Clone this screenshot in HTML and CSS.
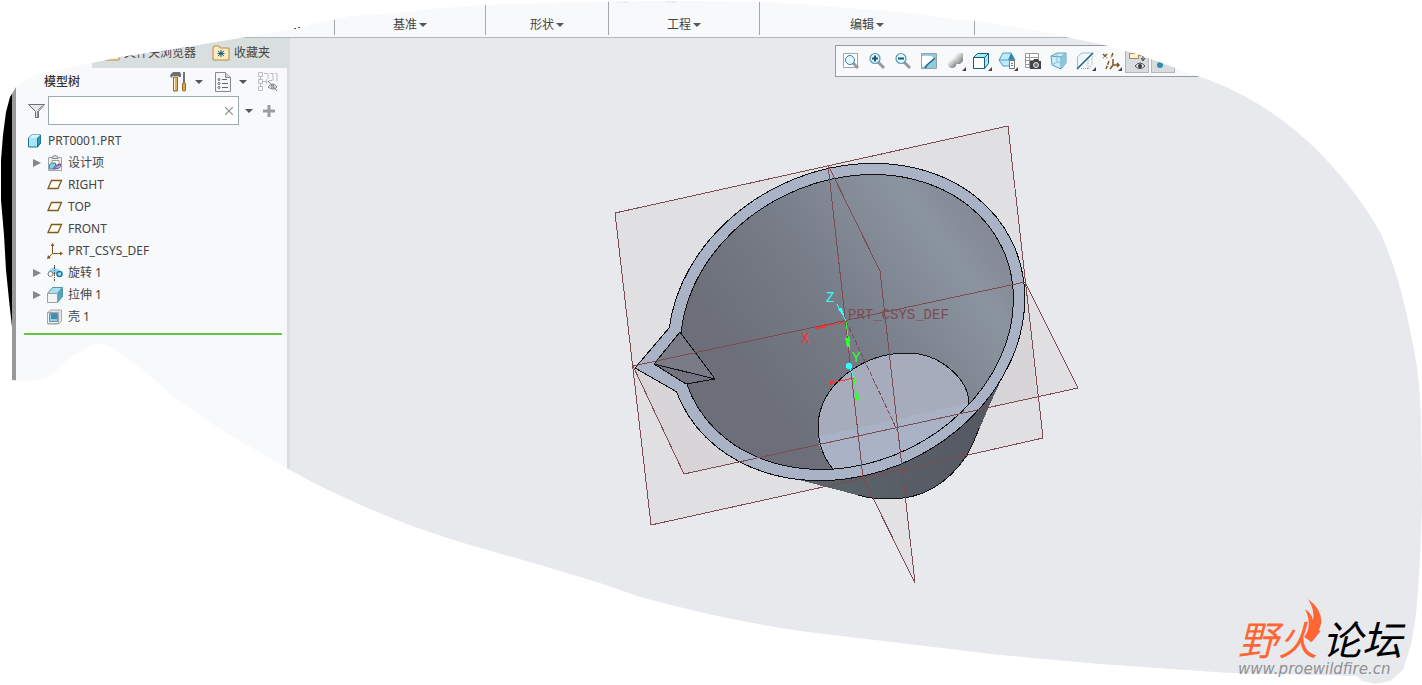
FILE: index.html
```html
<!DOCTYPE html>
<html lang="zh-CN">

<head>
    <meta charset="UTF-8">
    <meta name="viewport" content="width=device-width, initial-scale=1">
    <title>PRT0001</title>
    <link rel="stylesheet" href="styles.css">
</head>

<body>
<div class="app">
    <header class="ribbon">
        <div class="group group-first"></div>
        <div class="group group-datum"><button>基准<i class="caret"></i></button></div>
        <div class="group group-shape"><button>形状<i class="caret"></i></button></div>
        <div class="group group-datum"><button>工程<i class="caret"></i></button></div>
        <div class="group group-edit"><button>编辑<i class="caret"></i></button></div>
        <div class="group group-last"><button aria-label="更多"><i class="caret"></i></button></div>
    </header>

    <div class="main">
        <div class="edge"></div>
        <aside class="sidebar">
            <nav class="tabs">
                <span class="tab-active"></span>
                <button class="tab">
                    <svg width="16" height="16" viewBox="0 0 16 16"><path d="M1 3h6l1-2h5l1 2h1v12H1z" fill="#fde9bd" stroke="#b58a42"/></svg>
                    文件夹浏览器
                </button>
                <button class="tab">
                    <svg width="18" height="16" viewBox="0 0 18 16">
                        <path d="M1 3l1-2h5l1 2h9v12H1z" fill="#fde9bd" stroke="#b58a42"/>
                        <path d="M9 5v7M6 6l6 5M12 6l-6 5M5.500 8.500h7" stroke="#1b6584" stroke-width="1"/>
                        <circle cx="9" cy="8.500" r="1.500" fill="#1b6584"/>
                    </svg>
                    收藏夹
                </button>
            </nav>

            <div class="panel-head">
                <h2>模型树</h2>
                <button class="tool" aria-label="设置">
                    <svg width="18" height="20" viewBox="0 0 18 20">
                        <path d="M0 3l3-3h7l1 2v3H9L8 4H3L1 6z" fill="#6c6e78"/>
                        <path d="M3.500 5h4v14h-4z" fill="#dcae62" stroke="#93692a"/>
                        <path d="M4.500 6v12" stroke="#fff0c8"/>
                        <path d="M14 0v11" stroke="#72757d" stroke-width="2"/>
                        <rect x="12.500" y="11" width="3" height="8" rx="1" fill="#dca94f" stroke="#93692a"/>
                    </svg>
                    <i class="caret"></i>
                </button>
                <button class="tool" aria-label="显示">
                    <svg width="18" height="20" viewBox="0 0 18 20">
                        <path d="M1.500 .5h10l5 5v14h-15z" fill="#f4f6f8" stroke="#858a90"/>
                        <path d="M11.500 .5v5h5" fill="#ccd2d8" stroke="#858a90"/>
                        <g fill="#fff" stroke="#666"><circle cx="5" cy="7.500" r="1"/><circle cx="5" cy="11.500" r="1"/><circle cx="5" cy="15.500" r="1"/></g>
                        <path d="M8 7.500h5M8 11.500h6M8 15.500h6" stroke="#666"/>
                    </svg>
                    <i class="caret"></i>
                </button>
                <button class="tool" aria-label="隐藏">
                    <svg width="20" height="20" viewBox="0 0 20 20" fill="none" stroke="#b9bbbd">
                        <path d="M.5 .5h4v4h-4zM.5 7.500h4v4h-4zM.5 14.500h4v4h-4zM2.500 4.500v3M2.500 11.500v3M4.500 9.500h5"/>
                        <path d="M6 1.500h4v5M12 1.500h3v7M17 1.500h2v8M8.500 7v5M11 8.500h3"/>
                        <path d="M10 15q5-6 9 0q-4 4-9 0M10 9l9 10" stroke="#77797b"/>
                        <circle cx="14.500" cy="14.500" r="1.500" stroke="#77797b"/>
                    </svg>
                </button>
            </div>

            <div class="search">
                <svg width="17" height="16" viewBox="0 0 17 16">
                    <path d="M.5 1.500h16l-6 7v6h-3v-6z" fill="#e5e6e7" stroke="#6d7073"/>
                    <path d="M9.500 8v6M10 7l4-4" stroke="#8d9194"/>
                </svg>
                <div class="field">
                    <input type="text" aria-label="搜索模型树">
                    <button aria-label="清除">
                        <svg width="8" height="8" viewBox="0 0 8 8"><path d="M0 0l8 8M8 0l-8 8" stroke="#8b8e90" stroke-width="1.200"/></svg>
                    </button>
                </div>
                <button class="more" aria-label="搜索选项"><i class="caret"></i></button>
                <button class="plus" aria-label="添加">
                    <svg width="12" height="12" viewBox="0 0 12 12"><path d="M6 0v12M0 6h12" stroke="#9b9d9e" stroke-width="3"/></svg>
                </button>
            </div>

            <ul class="tree">
                <li class="root">
                    <svg width="16" height="16" viewBox="0 0 16 16"><path d="M1.500 5l3-3h9v8l-3 4h-9z" fill="#a8e7fb" stroke="#20738f"/><path d="M10.500 5l3-3v8l-3 4z" fill="#389bbd" stroke="#20738f"/><path d="M2 5h8l3-3H5z" fill="#d0f4ff"/></svg>
                    PRT0001.PRT
                </li>
                <li>
                    <i class="arrow"></i>
                    <svg width="16" height="16" viewBox="0 0 16 16">
                        <path d="M1.500 2.500h13v13h-13z" fill="#ededee" stroke="#a3a4a8"/>
                        <path d="M5 3.500q0-3 3-3t3 3z" fill="#ddd" stroke="#8b8d91"/>
                        <path d="M5 5.500h7v5H5z" fill="#fff" stroke="#b29b7b"/>
                        <path d="M2.500 10l2-2h4v4l-2 2h-4z" fill="#79d6ee" stroke="#398ba1"/>
                        <path d="M6.500 14q0-4 7-5q1 5-7 5M8 13l4-3" fill="#d6bdf0" stroke="#62408b"/>
                    </svg>
                    设计项
                </li>
                <li>
                    <i></i>
                    <svg width="16" height="16" viewBox="0 0 16 16"><path d="M4.500 3.500h10l-3.500 8H1z" fill="#fffdf5" stroke="#7c5a20" stroke-width="1.300"/></svg>
                    RIGHT
                </li>
                <li>
                    <i></i>
                    <svg width="16" height="16" viewBox="0 0 16 16"><path d="M4.500 3.500h10l-3.500 8H1z" fill="#fffdf5" stroke="#7c5a20" stroke-width="1.300"/></svg>
                    TOP
                </li>
                <li>
                    <i></i>
                    <svg width="16" height="16" viewBox="0 0 16 16"><path d="M4.500 3.500h10l-3.500 8H1z" fill="#fffdf5" stroke="#7c5a20" stroke-width="1.300"/></svg>
                    FRONT
                </li>
                <li>
                    <i></i>
                    <svg width="16" height="16" viewBox="0 0 16 16"><path d="M5.500 2v8.500H14M5.500 10.500L1 15" fill="none" stroke="#7c5a20"/><path d="M5.500 0l2 3h-4zM16 10.500l-3-2v4zM0 16l1-4 3 3z" fill="#7c5a20"/></svg>
                    PRT_CSYS_DEF
                </li>
                <li>
                    <i class="arrow"></i>
                    <svg width="16" height="16" viewBox="0 0 16 16">
                        <path d="M1 8q2-6 7-5t6 4l-3 3q-3-3-6 0z" fill="#8fd6ee"/>
                        <circle cx="3.500" cy="9" r="2.500" fill="#fff" stroke="#777"/>
                        <circle cx="12.500" cy="9" r="2.500" fill="#9ce5fb" stroke="#187ba0" stroke-width="1.500"/>
                        <path d="M7.500 0v16" stroke="#555" stroke-dasharray="4 1 1 1"/>
                    </svg>
                    旋转 1
                </li>
                <li>
                    <i class="arrow"></i>
                    <svg width="16" height="16" viewBox="0 0 16 16">
                        <path d="M.5 6.500l5-6h10l-5 6z" fill="#a8e0f4" stroke="#5996aa"/>
                        <path d="M10.500 6.500l5-6v9l-5 6z" fill="#51a5c2" stroke="#5996aa"/>
                        <path d="M.5 6.500h10v9H.5z" fill="#f4f4f4" stroke="#a0a0a0"/>
                    </svg>
                    拉伸 1
                </li>
                <li>
                    <i></i>
                    <svg width="16" height="16" viewBox="0 0 16 16">
                        <path d="M.5 4l3-3h11v11l-3 3H.5z" fill="#e4e5e8" stroke="#a4a6ab"/>
                        <path d="M.5 3.500h11v11H.5z" fill="#f4f4f5" stroke="#a4a6ab"/>
                        <path d="M2.500 4.500h8v8h-8z" fill="#95cfe3" stroke="#6892a2"/><path d="M4 5h6v5H4z" fill="#3d8fb0"/>
                    </svg>
                    壳 1
                </li>
            </ul>
        </aside>

        <main class="viewport">
            <svg class="model" viewBox="290 38 1132 647" shape-rendering="crispEdges">
                <defs>
                    <linearGradient id="inside" gradientUnits="userSpaceOnUse" x1="740" y1="370" x2="1015" y2="320">
                        <stop offset="0" stop-color="#6c6f79"/>
                        <stop offset=".35" stop-color="#757a85"/>
                        <stop offset=".85" stop-color="#8a949f"/>
                        <stop offset="1" stop-color="#858a97"/>
                    </linearGradient>
                    <linearGradient id="outside" gradientUnits="userSpaceOnUse" x1="830" y1="0" x2="980" y2="0">
                        <stop offset="0" stop-color="#5a636a"/>
                        <stop offset="1" stop-color="#565963"/>
                    </linearGradient>
                    <clipPath id="opening"><ellipse cx="847" cy="322" rx="172" ry="141" transform="rotate(-26 847 322)"/></clipPath>
                </defs>

                <!-- datum planes -->
                <path d="M615 213L1008 126 1043 438 651 525z" fill="#e0e0e2"/>
                <path d="M633 366L684 474 1037 397 1025 282z" fill="#d8d5d8"/>
                <path d="M1025 282L1078 388 1037 397z" fill="#e0e0e2"/>
                <path d="M863 478L906 500 915 583z" fill="#e2e2e5"/>

                <!-- outer wall -->
                <path d="M780 475L861 496Q870 499 890 499Q938 499 967 455C978 436 983 417 1005 372L900 440z" fill="url(#outside)"/>
                <path d="M858 495Q870 499 890 499Q938 499 967 455Q975 440 979 428" fill="none" stroke="#111"/>

                <!-- rim and opening -->
                <ellipse cx="846.500" cy="322" rx="184" ry="152" transform="rotate(-26 846.500 322)" fill="#a9b3c5" stroke="#111"/>
                <path d="M669 328L635 368 677 392 692 384 690 328z" fill="#a9b3c5"/>
                <path d="M669 328L635 368 677 392" fill="none" stroke="#111"/>
                <ellipse cx="847" cy="322" rx="172" ry="141" transform="rotate(-26 847 322)" fill="url(#inside)"/>

                <!-- cup floor -->
                <g clip-path="url(#opening)">
                    <path d="M833 469C821 455 818 440 818 425C820 384 863 353 907 353C941 353 969 380 969 404V480H838z" fill="#a6acbb"/>
                    <path d="M818 437L969 403V480H838L833 469Q819 453 818 437z" fill="#a9b3c5"/>
                    <path d="M833 469C821 455 818 440 818 425C820 384 863 353 907 353C941 353 969 380 969 404" fill="none" stroke="#111"/>
                </g>
                <ellipse cx="847" cy="322" rx="172" ry="141" transform="rotate(-26 847 322)" fill="none" stroke="#111"/>

                <!-- spout -->
                <path d="M680 332L654 364 686 384 715 379z" fill="#797c87"/>
                <path d="M654 364L715 379 686 384z" fill="#72757f"/>
                <path d="M680 332L654 364 686 384 715 379z" fill="none" stroke="#111"/>
                <path d="M654 364L715 379" stroke="#111"/>

                <g fill="none" stroke="#7d4a52">
                    <path d="M615 213L1008 126 1043 438M977 453L1043 438M615 213L651 525 977 453"/>
                    <path d="M633 366L1025 282 1078 388 684 474z"/>
                    <path d="M828 165L880 271 915 583 863 478z"/>
                    <path d="M846 321L898 432" stroke-dasharray="5 2"/>
                </g>

                <text class="csys" x="848" y="319">PRT_CSYS_DEF</text>

                <g stroke-width="1">
                    <path d="M816 328L846 322M831 383L854 378" stroke="#ff3030"/>
                    <path d="M814 329l12-5v4z" fill="#ff3030"/>
                    <circle cx="831" cy="383" r="2" fill="#ff3030"/>
                    <path d="M846 322L850 350M854 378L857 398" stroke="#30ff30"/>
                    <path d="M845 338h5l-1 9h-2z" fill="#30ff30"/>
                    <circle cx="857" cy="398" r="2.500" fill="#30ff30"/>
                    <path d="M837 304L846 321M849 366L854 378" stroke="#30ffff"/>
                    <path d="M838 309l4-1 3 9z" fill="#30ffff"/>
                    <circle cx="849" cy="366" r="3" fill="#30ffff"/>
                </g>
                <text class="axis axis-x" x="801" y="343">X</text>
                <text class="axis axis-y" x="852" y="362">Y</text>
                <text class="axis axis-z" x="826" y="302">Z</text>
            </svg>

            <div class="toolbar">
                <button aria-label="重新调整">
                    <svg width="18" height="18" viewBox="0 0 18 18"><path d="M1.500 1.500h14v14h-14z" fill="#fff" stroke="#a2a5a8"/><path d="M11 11l5 5" stroke="#999" stroke-width="3"/><circle cx="8" cy="8" r="4.500" fill="#e3f7ff" stroke="#377f9e"/></svg>
                </button>
                <button aria-label="放大">
                    <svg width="18" height="18" viewBox="0 0 18 18"><path d="M10 10l6 6" stroke="#999" stroke-width="3"/><circle cx="7" cy="6.500" r="5" fill="#e3f7ff" stroke="#5c9ab5" stroke-width="1.200"/><path d="M7 3.500v6M4 6.500h6" stroke="#14587a" stroke-width="2"/></svg>
                </button>
                <button aria-label="缩小">
                    <svg width="18" height="18" viewBox="0 0 18 18"><path d="M10 10l6 6" stroke="#999" stroke-width="3"/><circle cx="7" cy="6.500" r="5" fill="#e3f7ff" stroke="#5c9ab5" stroke-width="1.200"/><path d="M4 6.500h6" stroke="#14587a" stroke-width="2"/></svg>
                </button>
                <button aria-label="重画">
                    <svg width="18" height="18" viewBox="0 0 18 18"><path d="M1.500 1.500h15v15h-15z" fill="#8ccce2" stroke="#9b9fa2"/><path d="M2 4q10-1 12 2L8 13l-6 2z" fill="#fff"/><path d="M15 6l-8 7-2 3" fill="none" stroke="#1d6686" stroke-width="1.500"/></svg>
                </button>
                <button class="drop" aria-label="显示样式">
                    <svg width="18" height="18" viewBox="0 0 18 18">
                        <defs><linearGradient id="metal" x1="0" y1="0" x2="1" y2="1"><stop offset=".2" stop-color="#f8f8f8"/><stop offset="1" stop-color="#6b6b6b"/></linearGradient></defs>
                        <path d="M9 3l2-2h6v8l-3 3H7V8z" fill="url(#metal)"/><circle cx="6" cy="11.500" r="4.500" fill="url(#metal)"/>
                    </svg>
                </button>
                <button class="drop" aria-label="已保存方向">
                    <svg width="18" height="18" viewBox="0 0 18 18"><path d="M1.500 5.500l4-4h11v10l-4 5h-11z" fill="#a8e7f8" stroke="#155d7b"/><path d="M1.500 5.500h11v11h-11z" fill="#fff" stroke="#155d7b"/><path d="M12.500 5.500l4-4" stroke="#155d7b"/></svg>
                </button>
                <button class="drop" aria-label="视图管理器">
                    <svg width="18" height="18" viewBox="0 0 18 18"><path d="M1 8l4-7h8l4 7-4 6H5z" fill="#bcecf9" stroke="#569bb5"/><path d="M13 1l4 7h-7z" fill="#2e87aa"/><path d="M1 8h16" stroke="#569bb5"/><path d="M11.500 8.500h5v8h-5z" fill="#fff" stroke="#777"/><path d="M13 11.500h2M13 13.500h2" stroke="#777"/></svg>
                </button>
                <button aria-label="视图图像">
                    <svg width="18" height="18" viewBox="0 0 18 18"><path d="M1.500 1.500h13v14h-13zM5.500 1.500v14M1.500 5.500h13M1.500 8.500h13M1.500 12.500h5" fill="#fff" stroke="#999"/><path d="M6 9h3l1-2h4l1 2h2v8H6z" fill="#414447"/><circle cx="12" cy="13" r="2.500" fill="#777" stroke="#eee"/></svg>
                </button>
                <button aria-label="透视图">
                    <svg width="18" height="18" viewBox="0 0 18 18"><path d="M1 4l6-3h9v10l-5 6-9-4z" fill="#c9edf8" stroke="#599fba"/><path d="M1 4l10 1 5-4M11 5v12" fill="none" stroke="#599fba"/><path d="M7 2v8l-5 3M7 10l9 1" fill="none" stroke="#8fc4d7"/><path d="M11 5l5-4v10l-5 6z" fill="#8cc5d9"/></svg>
                </button>
                <button class="drop" aria-label="截面">
                    <svg width="18" height="18" viewBox="0 0 18 18"><path d="M1.500 5l4-4h11L1.500 16z" fill="#f0fafd" stroke="#8fc1d3"/><path d="M5 16.500h8l3-4V4M12 7v9" fill="none" stroke="#999" stroke-dasharray="1 1"/><path d="M1 17L17 1" stroke="#176486" stroke-width="1.500"/></svg>
                </button>
                <button class="drop" aria-label="基准显示过滤器">
                    <svg width="18" height="18" viewBox="0 0 18 18" fill="none" stroke="#7c5a20" stroke-width="1.500"><path d="M1 2l4 4M5 2L1 6M11 1l-2 5M7 9l-3 8" stroke-dasharray="4 1"/><path d="M11 7v6h6M11 13l-3 4M15 11l2 2-2 2"/></svg>
                </button>
                <button class="on" aria-label="注释显示">
                    <svg width="18" height="18" viewBox="0 0 18 18"><path d="M1.500 1.500h9v5h-9z" fill="#fff1cf" stroke="#aa8950"/><path d="M11 3h4v5M13 6l2 3 2-3" fill="none" stroke="#444"/><path d="M7 14q5-6 10 0q-5 5-10 0z" fill="#eee" stroke="#444"/><circle cx="12" cy="14" r="2" fill="#333"/></svg>
                </button>
                <button class="on" aria-label="旋转中心">
                    <svg width="18" height="18" viewBox="0 0 18 18"><path d="M6 13l9-8" stroke="#599fba"/><circle cx="6" cy="13" r="3" fill="#3489ac"/></svg>
                </button>
            </div>
        </main>
    </div>

    <!-- torn paper edge around the window -->
    <svg class="cutout" viewBox="0 0 1422 685" preserveAspectRatio="none">
        <path d="M616 2h14M666 2h12" stroke="#ccc" stroke-dasharray="1 1"/>
        <path fill="#fff" fill-rule="evenodd" d="M0 0H1422V685H0z
            M16 87L20 83 35 75 60 69 92 63 120 57 175 49 240 38 290 30 312 24 334 20 350 16 400 13 430 9 485 5 550 3 600 2 640 1 700 1 760 2
            Q806 4 850 8L910 13 950 19 975 21 1020 28 1040 31 1066 37 1104 45 1140 55 1170 66 1200 77
            C1245 92 1285 118 1320 153C1345 179 1365 205 1380 232C1394 262 1404 300 1408 320L1414 350
            Q1420 380 1421 420L1422 500Q1421 560 1416 615L1411 645 1403 670 1390 681
            1375 684 1362 681 1357 676 1230 673 1200 671 1100 664 1000 655 900 643 800 631Q720 619 640 597L600 583 540 565 470 545
            C410 528 340 498 290 470L250 447 215 426 175 398 150 376 125 357 110 347 98 343 88 347 70 358 55 372 45 379 25 381 12 380
            12 327 9 300 6 270 4 235 1 200 1 160 3 135 6 112 10 97z"/>
        <path d="M294 28h2v1h-2zM298 27h2v1h-2z" fill="#555"/>
    </svg>

    <a class="watermark" href="#">
        <span class="brand">
            <span class="hot">野火</span><span>论坛</span>
            <svg class="flame" width="18" height="44" viewBox="0 0 18 44"><path d="M4 0Q19 11 17 25Q16 32 6 42L0 38Q9 27 1 10Q8 15 9 21Q11 11 4 0z" fill="#ff6633"/></svg>
        </span>
        <span class="url">www.proewildfire.cn</span>
    </a>
</div>
</body>
</html>
```
FILE: styles.css
```css
* {
    box-sizing: border-box;
}

body {
    margin: 0;
    font: 12px/20px "Noto Sans", "Noto Sans CJK SC", sans-serif;
    color: #444;
    background: #fff;
}

button {
    display: flex;
    align-items: center;
    justify-content: center;
    padding: 0;
    border: 0;
    background: none;
    font: inherit;
    color: inherit;
}

svg {
    flex: none;
}

.app {
    position: relative;
    display: flex;
    flex-direction: column;
    min-height: 100vh;
    overflow: hidden;
}

.caret {
    border: 4px solid transparent;
    border-top-color: #555;
    border-bottom: 0;
}

/* ribbon */
.ribbon {
    display: flex;
    height: 38px;
    border-bottom: 1px solid #adbabd;
    background: #f8f9fb;
}

.group {
    display: flex;
    align-items: flex-end;
    justify-content: center;
    margin-bottom: 2px;
    border-right: 1px solid #a3a8ab;
}

.group .caret {
    margin-left: 2px;
}

.group-first {
    width: 335px;
}

.group-datum {
    width: 151px;
}

.group-shape {
    width: 123px;
}

.group-edit {
    width: 215px;
}

.group-last {
    width: 94px;
    border: 0;
}

.group-last button {
    height: 20px;
}

/* body */
.main {
    display: flex;
    flex: 1;
}

.edge {
    width: 12px;
    background: linear-gradient(#000 290px, #fff 290px);
}

.sidebar {
    width: 278px;
    border-left: 4px solid #999;
    border-right: 3px solid #d9dfdf;
    background: #f8f9fb;
}

.tabs {
    display: flex;
    height: 30px;
    background: #d9dfdf;
}

.tab-active {
    width: 76px;
    background: #f8f9fb;
}

.tab {
    gap: 4px;
    margin-left: 12px;
}

.tab + .tab {
    margin-left: 16px;
}

.panel-head {
    display: flex;
    align-items: center;
    gap: 11px;
    height: 28px;
    padding: 0 9px 0 28px;
}

.panel-head h2 {
    margin: 0 auto 0 0;
    font-size: 12px;
    font-weight: 500;
    color: #333;
}

.tool {
    gap: 7px;
}

.search {
    display: flex;
    align-items: center;
    padding-left: 12px;
}

.field {
    display: flex;
    width: 191px;
    height: 29px;
    margin-left: 3px;
    padding-right: 5px;
    border: 1px solid #9aabb0;
    background: #fff;
}

.field input {
    flex: 1;
    min-width: 0;
    border: 0;
    outline: none;
    font: inherit;
}

.more {
    margin: 0 10px 0 6px;
}

/* model tree */
.tree {
    margin: 5px 5px 0 8px;
    padding: 0 0 5px;
    list-style: none;
    border-bottom: 2px solid #66c544;
}

.tree li {
    display: flex;
    align-items: center;
    gap: 5px;
    height: 22px;
    padding-left: 8px;
}

.tree .root {
    padding-left: 3px;
}

.tree i {
    width: 10px;
}

.tree .arrow {
    width: 8px;
    height: 8px;
    margin: 0 1px;
    border: 4px solid transparent;
    border-left: 8px solid #85888a;
    border-right: 0;
}

/* graphics area */
.viewport {
    position: relative;
    flex: 1;
    background: #e8e9ed;
}

.model {
    position: absolute;
    width: 100%;
    height: 100%;
}

.csys {
    font: 14px "Liberation Mono", monospace;
    fill: #7d4a52;
}

.axis {
    font: 14px "Liberation Mono", monospace;
}

.axis-x {
    fill: #ff3030;
}

.axis-y {
    fill: #30ff30;
}

.axis-z {
    fill: #30ffff;
}

.toolbar {
    position: absolute;
    top: 7px;
    left: 545px;
    display: flex;
    align-items: center;
    gap: 2px;
    height: 32px;
    width: 380px;
    padding: 0 3px;
    border: 1px solid #999c9f;
    background: #f8f9fb;
}

.toolbar button {
    position: relative;
    width: 24px;
    height: 24px;
}

.toolbar .drop::after {
    content: "";
    position: absolute;
    right: 1px;
    bottom: 2px;
    border: 2px solid #444;
    border-top-color: transparent;
    border-left-color: transparent;
}

.toolbar .on {
    border: 1px solid #b3b6b9;
    background: #d9dcde;
}

.cutout {
    position: absolute;
    width: 100%;
    height: 100%;
    pointer-events: none;
}

/* forum mark */
.watermark {
    position: absolute;
    right: 20px;
    bottom: 6px;
    text-decoration: none;
    color: #000;
}

.brand {
    position: relative;
    display: flex;
    gap: 4px;
    font: italic 40px/42px "Noto Sans CJK SC", sans-serif;
}

.hot {
    color: #ff6633;
}

.flame {
    position: absolute;
    left: 66px;
    top: -18px;
}

.url {
    display: block;
    font: italic 15px/20px "DejaVu Sans", sans-serif;
    color: #8f9193;
}
```
